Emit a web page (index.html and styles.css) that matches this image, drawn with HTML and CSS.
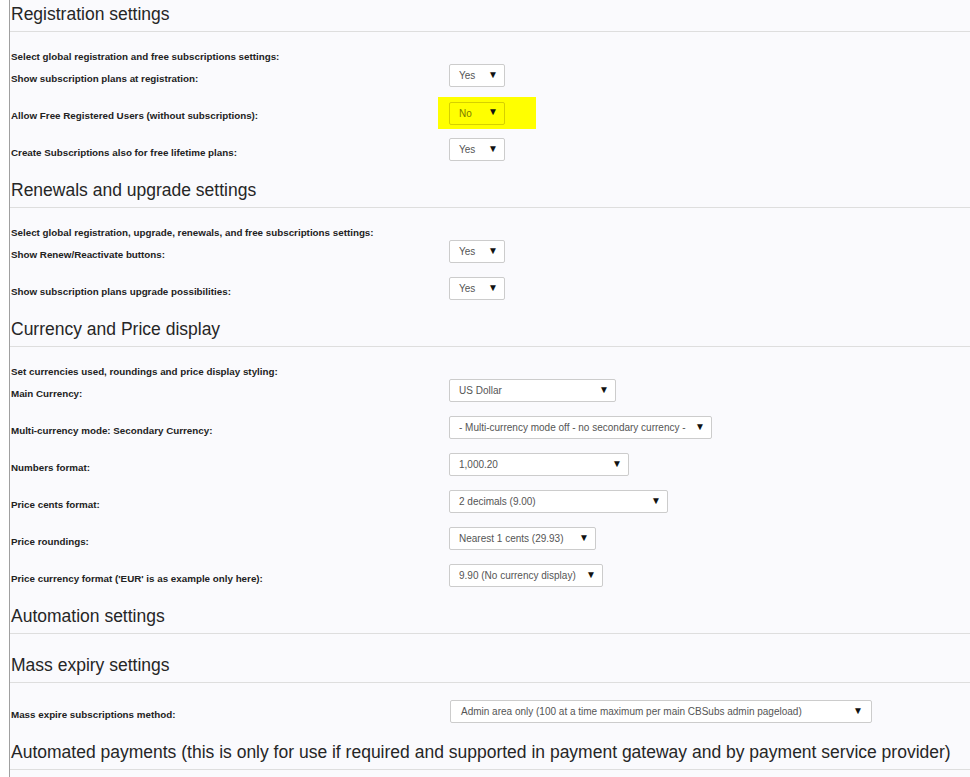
FILE: index.html
```html
<!DOCTYPE html>
<html lang="en">
<head>
<meta charset="utf-8">
<title>CBSubs settings</title>
<link rel="stylesheet" href="styles.css">
</head>
<body>
<div class="page">

  <section class="section">
    <h3 class="section-title">Registration settings</h3>
    <div class="section-body">
      <p class="intro">Select global registration and free subscriptions settings:</p>
      <div class="row">
        <span class="row-label">Show subscription plans at registration:</span>
        <div class="field"><div class="select w-yes"><span class="select-text">Yes</span><span class="caret">▼</span></div></div>
      </div>
      <div class="row">
        <span class="row-label">Allow Free Registered Users (without subscriptions):</span>
        <div class="field"><div class="highlight"><div class="select select--marked w-yes"><span class="select-text">No</span><span class="caret">▼</span></div></div></div>
      </div>
      <div class="row">
        <span class="row-label">Create Subscriptions also for free lifetime plans:</span>
        <div class="field"><div class="select w-yes"><span class="select-text">Yes</span><span class="caret">▼</span></div></div>
      </div>
    </div>
  </section>

  <section class="section">
    <h3 class="section-title">Renewals and upgrade settings</h3>
    <div class="section-body">
      <p class="intro">Select global registration, upgrade, renewals, and free subscriptions settings:</p>
      <div class="row">
        <span class="row-label">Show Renew/Reactivate buttons:</span>
        <div class="field"><div class="select w-yes"><span class="select-text">Yes</span><span class="caret">▼</span></div></div>
      </div>
      <div class="row">
        <span class="row-label">Show subscription plans upgrade possibilities:</span>
        <div class="field"><div class="select w-yes"><span class="select-text">Yes</span><span class="caret">▼</span></div></div>
      </div>
    </div>
  </section>

  <section class="section">
    <h3 class="section-title">Currency and Price display</h3>
    <div class="section-body">
      <p class="intro">Set currencies used, roundings and price display styling:</p>
      <div class="row">
        <span class="row-label">Main Currency:</span>
        <div class="field"><div class="select w-currency"><span class="select-text">US Dollar</span><span class="caret">▼</span></div></div>
      </div>
      <div class="row">
        <span class="row-label">Multi-currency mode: Secondary Currency:</span>
        <div class="field"><div class="select w-multi"><span class="select-text">- Multi-currency mode off - no secondary currency -</span><span class="caret">▼</span></div></div>
      </div>
      <div class="row">
        <span class="row-label">Numbers format:</span>
        <div class="field"><div class="select w-numbers"><span class="select-text">1,000.20</span><span class="caret">▼</span></div></div>
      </div>
      <div class="row">
        <span class="row-label">Price cents format:</span>
        <div class="field"><div class="select w-cents"><span class="select-text">2 decimals (9.00)</span><span class="caret">▼</span></div></div>
      </div>
      <div class="row">
        <span class="row-label">Price roundings:</span>
        <div class="field"><div class="select w-round"><span class="select-text">Nearest 1 cents (29.93)</span><span class="caret">▼</span></div></div>
      </div>
      <div class="row">
        <span class="row-label">Price currency format ('EUR' is as example only here):</span>
        <div class="field"><div class="select w-format"><span class="select-text">9.90 (No currency display)</span><span class="caret">▼</span></div></div>
      </div>
    </div>
  </section>

  <section class="section">
    <h3 class="section-title">Automation settings</h3>
    <div class="section-body section-body--empty"></div>
  </section>

  <section class="section">
    <h3 class="section-title">Mass expiry settings</h3>
    <div class="section-body section-body--no-intro">
      <div class="row">
        <span class="row-label">Mass expire subscriptions method:</span>
        <div class="field field--shift"><div class="select w-mass"><span class="select-text">Admin area only (100 at a time maximum per main CBSubs admin pageload)</span><span class="caret">▼</span></div></div>
      </div>
    </div>
  </section>

  <section class="section">
    <h3 class="section-title">Automated payments (this is only for use if required and supported in payment gateway and by payment service provider)</h3>
  </section>

</div>
</body>
</html>
```

FILE: styles.css
```css
html, body {
  margin: 0;
  padding: 0;
  background: #ffffff;
}

body {
  font-family: "Liberation Sans", Arial, sans-serif;
  color: #222222;
  height: 777px;
  overflow: hidden;
}

.page {
  margin-left: 9px;
  border-left: 1px solid #a0a0a0;
  background: #fafafd;
  min-height: 777px;
}

.section + .section {
  margin-top: 15px;
}

.section-title {
  margin: 0;
  padding: 3px 0 6px 1px;
  font-size: 17.5px;
  line-height: 22px;
  font-weight: normal;
  color: #262626;
  border-bottom: 1px solid #dedede;
  white-space: nowrap;
}

.section-body {
  padding: 16px 0 0 1px;
}

.section-body--empty {
  padding-top: 2px;
}

.section-body--no-intro {
  padding-top: 17px;
}

.intro {
  margin: 0;
  padding-top: 2px;
  font-size: 9.8px;
  line-height: 14px;
  font-weight: bold;
  color: #222222;
}

.row {
  display: grid;
  grid-template-columns: 438px auto;
  align-items: center;
  height: 23px;
}

.row + .row {
  margin-top: 14px;
}

.row-label {
  font-size: 9.8px;
  line-height: 14px;
  font-weight: bold;
  color: #222222;
  padding-top: 7px;
}

.field {
  display: flex;
  position: relative;
}

.field--shift {
  margin-left: 1px;
}

.select {
  box-sizing: border-box;
  height: 23px;
  display: flex;
  align-items: center;
  justify-content: space-between;
  padding: 0 6px 0 9px;
  background: #ffffff;
  border: 1px solid #cccccc;
  border-radius: 2px;
  font-size: 10px;
  color: #555555;
}

.select-text {
  white-space: nowrap;
}

.caret {
  font-size: 10px;
  color: #111111;
  line-height: 1;
  margin-top: -2px;
}

.highlight {
  position: absolute;
  left: -11px;
  top: -4px;
  width: 98px;
  height: 32px;
  background: #ffff00;
  display: flex;
  align-items: center;
  padding-left: 11px;
  box-sizing: border-box;
}

.field:has(.highlight) {
  height: 23px;
}

.select--marked {
  background: #ffff00;
  border-color: #d6d000;
  color: #7a7a00;
}

.w-yes { width: 56px; }
.w-currency { width: 167px; }
.w-multi { width: 263px; }
.w-numbers { width: 180px; }
.w-cents { width: 219px; }
.w-round { width: 147px; }
.w-format { width: 154px; }
.w-mass { width: 422px; padding-left: 10px; padding-right: 8px; }
```
